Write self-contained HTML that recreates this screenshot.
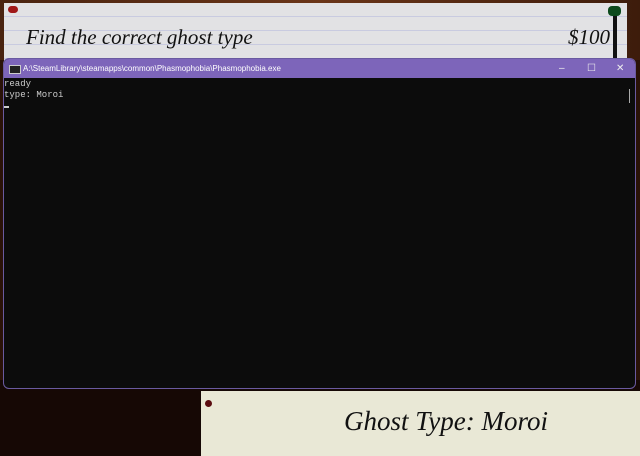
<!DOCTYPE html>
<html><head><style>
body{margin:0;width:640px;height:456px;overflow:hidden;background:#2a1208;position:relative;font-family:"Liberation Sans",sans-serif}
.wood{position:absolute;left:0;top:0;width:640px;height:60px;background:linear-gradient(90deg,#4a2410,#6a3518,#3d1c0b)}
.dark{position:absolute;left:0;top:380px;width:640px;height:76px;background:#160805}
.paper1{position:absolute;left:4px;top:3px;width:623px;height:60px;background:repeating-linear-gradient(#e2e2e4 0 13px,#c9cbe0 13px 14px);}
.t1{position:absolute;left:26px;top:25px;font:italic 21px "Liberation Serif",serif;color:#111}
.t2{position:absolute;left:568px;top:25px;font:italic 21px "Liberation Serif",serif;color:#111}
.pole{position:absolute;left:613px;top:8px;width:4px;height:55px;background:#111}
.pin{position:absolute;left:608px;top:6px;width:13px;height:10px;background:#0c4a1c;border-radius:4px}
.rpin{position:absolute;left:8px;top:6px;width:10px;height:7px;background:#a01818;border-radius:4px}
.win{position:absolute;left:3px;top:58px;width:631px;height:329px;background:#0c0c0c;border:1px solid #6a5aa0;border-radius:6px;overflow:hidden}
.tb{height:19px;background:#7d65ba;color:#fff;font-size:8px;line-height:19px;padding-left:19px;position:relative}
.ic{position:absolute;left:5px;top:6px;width:10px;height:7px;background:#222;border:1px solid #ccc}
.ctl{position:absolute;top:0;font-size:10px;color:#eee}
.con{font:9px "Liberation Mono",monospace;color:#ccc;line-height:11px;padding-top:1px}
.sb{position:absolute;left:625px;top:30px;width:1px;height:14px;background:#aaa}
.paper2{position:absolute;left:201px;top:391px;width:439px;height:65px;background:#e9e8d6}
.t3{position:absolute;left:344px;top:406px;font:italic 27px "Liberation Serif",serif;color:#111}
.bpin{position:absolute;left:205px;top:400px;width:7px;height:7px;background:#5a0c10;border-radius:50%}
</style></head><body>
<div class="wood"></div><div class="dark"></div>
<div class="paper1"></div><div class="rpin"></div>
<div class="t1">Find the correct ghost type</div><div class="t2">$100</div>
<div class="pole"></div><div class="pin"></div>
<div class="paper2"></div><div class="bpin"></div>
<div class="t3">Ghost Type: Moroi</div>
<div class="win"><div class="tb"><div class="ic"></div>A:\SteamLibrary\steamapps\common\Phasmophobia\Phasmophobia.exe
<span class="ctl" style="left:555px">–</span><span class="ctl" style="left:583px">☐</span><span class="ctl" style="left:612px">✕</span></div>
<div class="con">ready<br>type: Moroi<br><span style="display:inline-block;width:5px;height:2px;background:#ccc"></span></div>
<div class="sb"></div></div>
</body></html>
